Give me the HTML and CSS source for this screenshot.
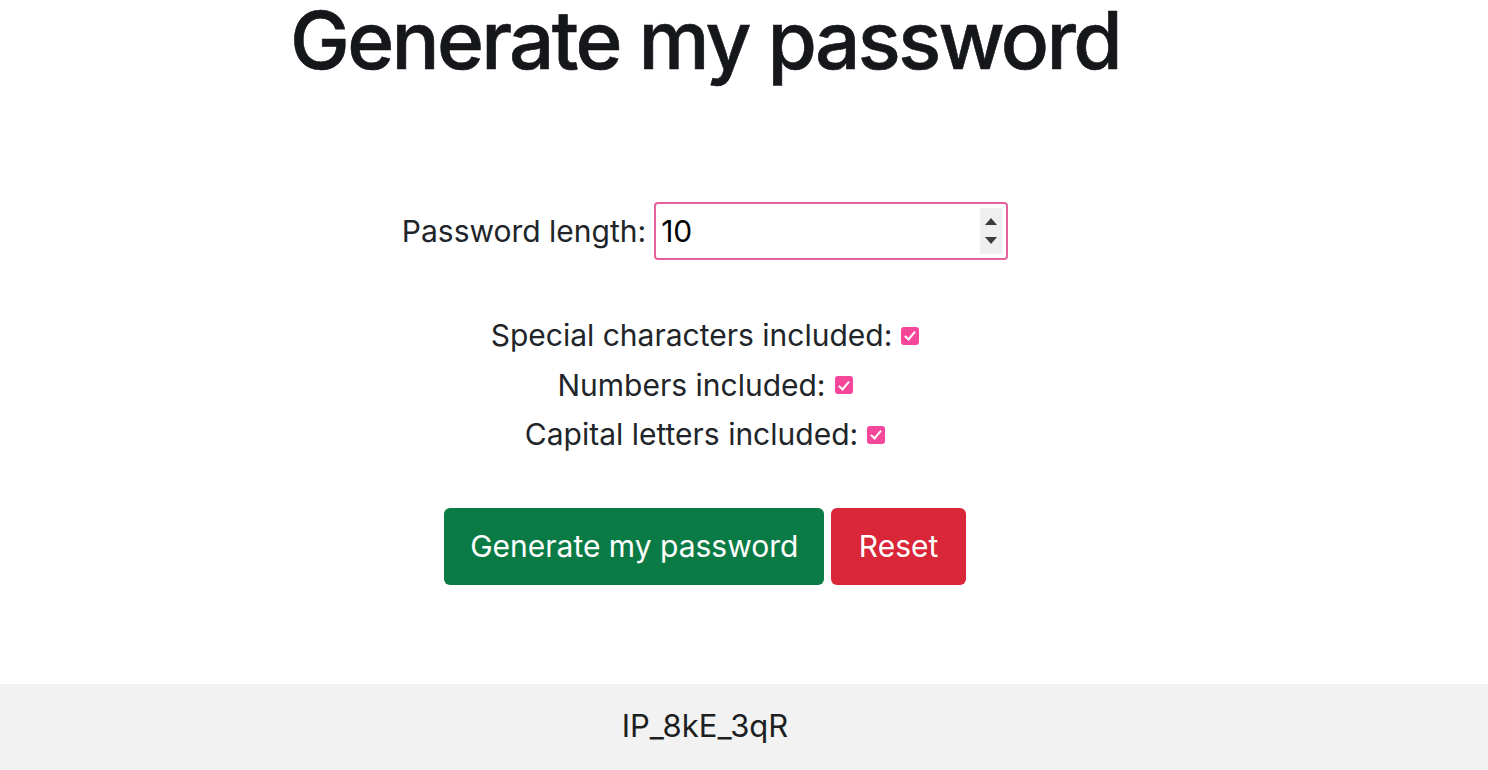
FILE: index.html
```html
<!DOCTYPE html>
<html lang="en">
<head>
<meta charset="utf-8">
<title>Password generator</title>
<link rel="stylesheet" href="styles.css">
</head>
<body>
<main class="page">
  <h1 class="title">Generate my password</h1>
  <form class="form">
    <div class="length-row">
      <label for="len" class="length-label">Password length:</label>
      <div class="number-wrap">
        <input type="number" id="len" class="number-input" value="10">
        <span class="spinner" aria-hidden="true"><span class="tri tri-up"></span><span class="tri tri-down"></span></span>
      </div>
    </div>
    <div class="options">
      <label class="opt">Special characters included: <input type="checkbox" class="check" checked></label>
      <label class="opt">Numbers included: <input type="checkbox" class="check" checked></label>
      <label class="opt">Capital letters included: <input type="checkbox" class="check" checked></label>
    </div>
    <div class="actions">
      <button type="button" class="btn btn-green">Generate my password</button>
      <button type="reset" class="btn btn-red">Reset</button>
    </div>
  </form>
</main>
<footer class="footer">
  <span class="footer-text">IP_8kE_3qR</span>
</footer>
</body>
</html>
```
FILE: styles.css
```css
html, body {
  margin: 0;
  padding: 0;
}
body {
  font-family: Inter, "Liberation Sans", sans-serif;
  color: #212529;
  background: #fff;
}
.page {
  padding-right: 78px;
  display: flex;
  flex-direction: column;
  align-items: center;
  height: 684px;
  box-sizing: border-box;
}
.title {
  margin: 0;
  font-size: 80px;
  line-height: 80px;
  font-weight: 500;
  letter-spacing: -2.7px;
  color: #15171a;
  -webkit-text-stroke: 0.6px #15171a;
}
.form {
  display: flex;
  flex-direction: column;
  align-items: center;
  margin-top: 122px;
}
.length-row {
  display: flex;
  align-items: center;
  gap: 8px;
  font-size: 30px;
}
.number-wrap {
  position: relative;
  display: flex;
}
.number-input {
  width: 354px;
  height: 58px;
  box-sizing: border-box;
  border: 2px solid #e5609c;
  border-radius: 4px;
  padding: 0 0 0 5px;
  font-family: inherit;
  font-size: 30px;
  color: #000;
  outline: none;
  -moz-appearance: textfield;
}
.number-input::-webkit-inner-spin-button,
.number-input::-webkit-outer-spin-button {
  -webkit-appearance: none;
  margin: 0;
}
.spinner {
  position: absolute;
  right: 6px;
  top: 6px;
  bottom: 6px;
  width: 22px;
  background: #efefef;
  display: flex;
  flex-direction: column;
  align-items: center;
  justify-content: space-around;
  padding: 4px 0;
  box-sizing: border-box;
}
.tri {
  width: 0;
  height: 0;
  border-left: 6px solid transparent;
  border-right: 6px solid transparent;
}
.tri-up {
  border-bottom: 7px solid #3a3a3a;
}
.tri-down {
  border-top: 7px solid #3a3a3a;
}
.options {
  margin-top: 51px;
  display: flex;
  flex-direction: column;
  align-items: center;
  font-size: 30px;
  line-height: 49.5px;
}
.opt {
  display: flex;
  align-items: center;
  gap: 9px;
}
.check {
  -webkit-appearance: none;
  appearance: none;
  margin: 0;
  width: 18px;
  height: 18px;
  border-radius: 3px;
  background: #f4479a;
  position: relative;
}
.check::after {
  content: "";
  position: absolute;
  left: 6px;
  top: 2.5px;
  width: 4px;
  height: 9px;
  border-right: 2.5px solid #fff;
  border-bottom: 2.5px solid #fff;
  transform: rotate(40deg);
}
.actions {
  margin-top: 48px;
  display: flex;
  gap: 7px;
}
.btn {
  height: 77px;
  border: none;
  border-radius: 6px;
  padding: 0 26px;
  font-family: inherit;
  font-size: 30px;
  color: #fff;
  cursor: pointer;
}
.btn-green {
  background: #0b7b46;
}
.btn-red {
  background: #d92638;
  padding: 0 27.5px;
}
.footer {
  height: 86px;
  background: #f2f2f2;
  display: flex;
  align-items: center;
  justify-content: center;
  padding-right: 78px;
  font-size: 31px;
}
.footer-text {
  color: #1c1e21;
  margin-top: -3px;
}
```
